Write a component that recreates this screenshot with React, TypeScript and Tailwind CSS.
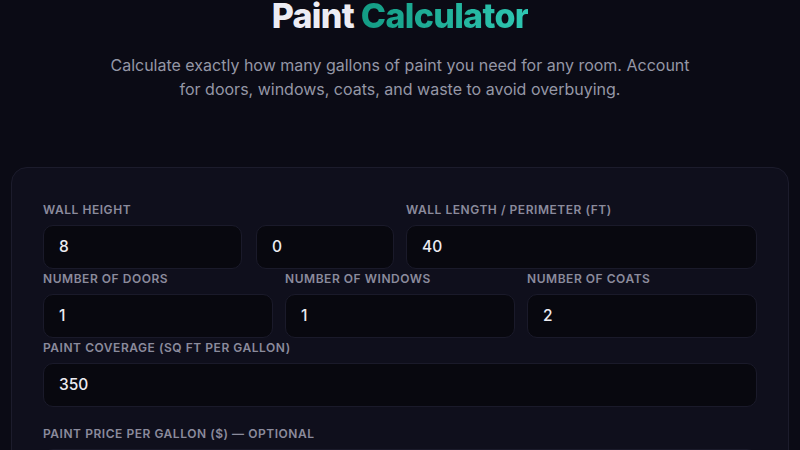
import React from 'react'

function Field({ label, value, className = '' }: { label?: string; value: string; className?: string }) {
  return (
    <div className={className}>
      {label && (
        <label className="mb-[7px] block text-[12px] font-semibold uppercase leading-4 tracking-[0.045em] text-[#8b8b9c]">
          {label}
        </label>
      )}
      <div className="flex h-[44px] items-center rounded-[10px] border border-[#1a1a2a] bg-[#08080f] px-[15px] text-[15.5px] font-medium text-[#ececf2]">
        {value}
      </div>
    </div>
  )
}

export default function App() {
  return (
    <div
      className="min-h-[450px] overflow-hidden bg-[#0b0b15] px-[11px]"
      style={{ fontFamily: 'Inter, "Noto Sans", sans-serif' }}
    >
      <header className="text-center">
        <h1 className="-mt-[4px] text-[34px] font-extrabold leading-[40px] tracking-[-0.02em] text-[#ececf3]">
          Paint{' '}
          <span className="bg-gradient-to-r from-[#139c84] to-[#2ec7b2] bg-clip-text text-transparent">
            Calculator
          </span>
        </h1>
        <p className="mx-auto mt-[17px] max-w-[600px] text-[16px] leading-6 text-[#9597a6]">
          Calculate exactly how many gallons of paint you need for any room. Account for doors, windows, coats, and
          waste to avoid overbuying.
        </p>
      </header>

      <section className="mt-[66px] rounded-[16px] border border-[#1c1c2c] bg-[#0f0f1c] px-[31px] pt-[34px] pb-8">
        <div className="grid grid-cols-2 gap-x-3">
          <div>
            <label className="mb-[7px] block text-[12px] font-semibold uppercase leading-4 tracking-[0.045em] text-[#8b8b9c]">
              Wall Height
            </label>
            <div className="flex gap-[14px]">
              <Field value="8" className="flex-1" />
              <Field value="0" className="w-[138px]" />
            </div>
          </div>
          <Field label="Wall Length / Perimeter (ft)" value="40" />
        </div>

        <div className="mt-[2px] grid grid-cols-3 gap-x-3">
          <Field label="Number of Doors" value="1" />
          <Field label="Number of Windows" value="1" />
          <Field label="Number of Coats" value="2" />
        </div>

        <Field label="Paint Coverage (sq ft per gallon)" value="350" className="mt-[2px]" />

        <Field label="Paint Price per Gallon ($) — optional" value="" className="mt-[19px]" />
      </section>
    </div>
  )
}
